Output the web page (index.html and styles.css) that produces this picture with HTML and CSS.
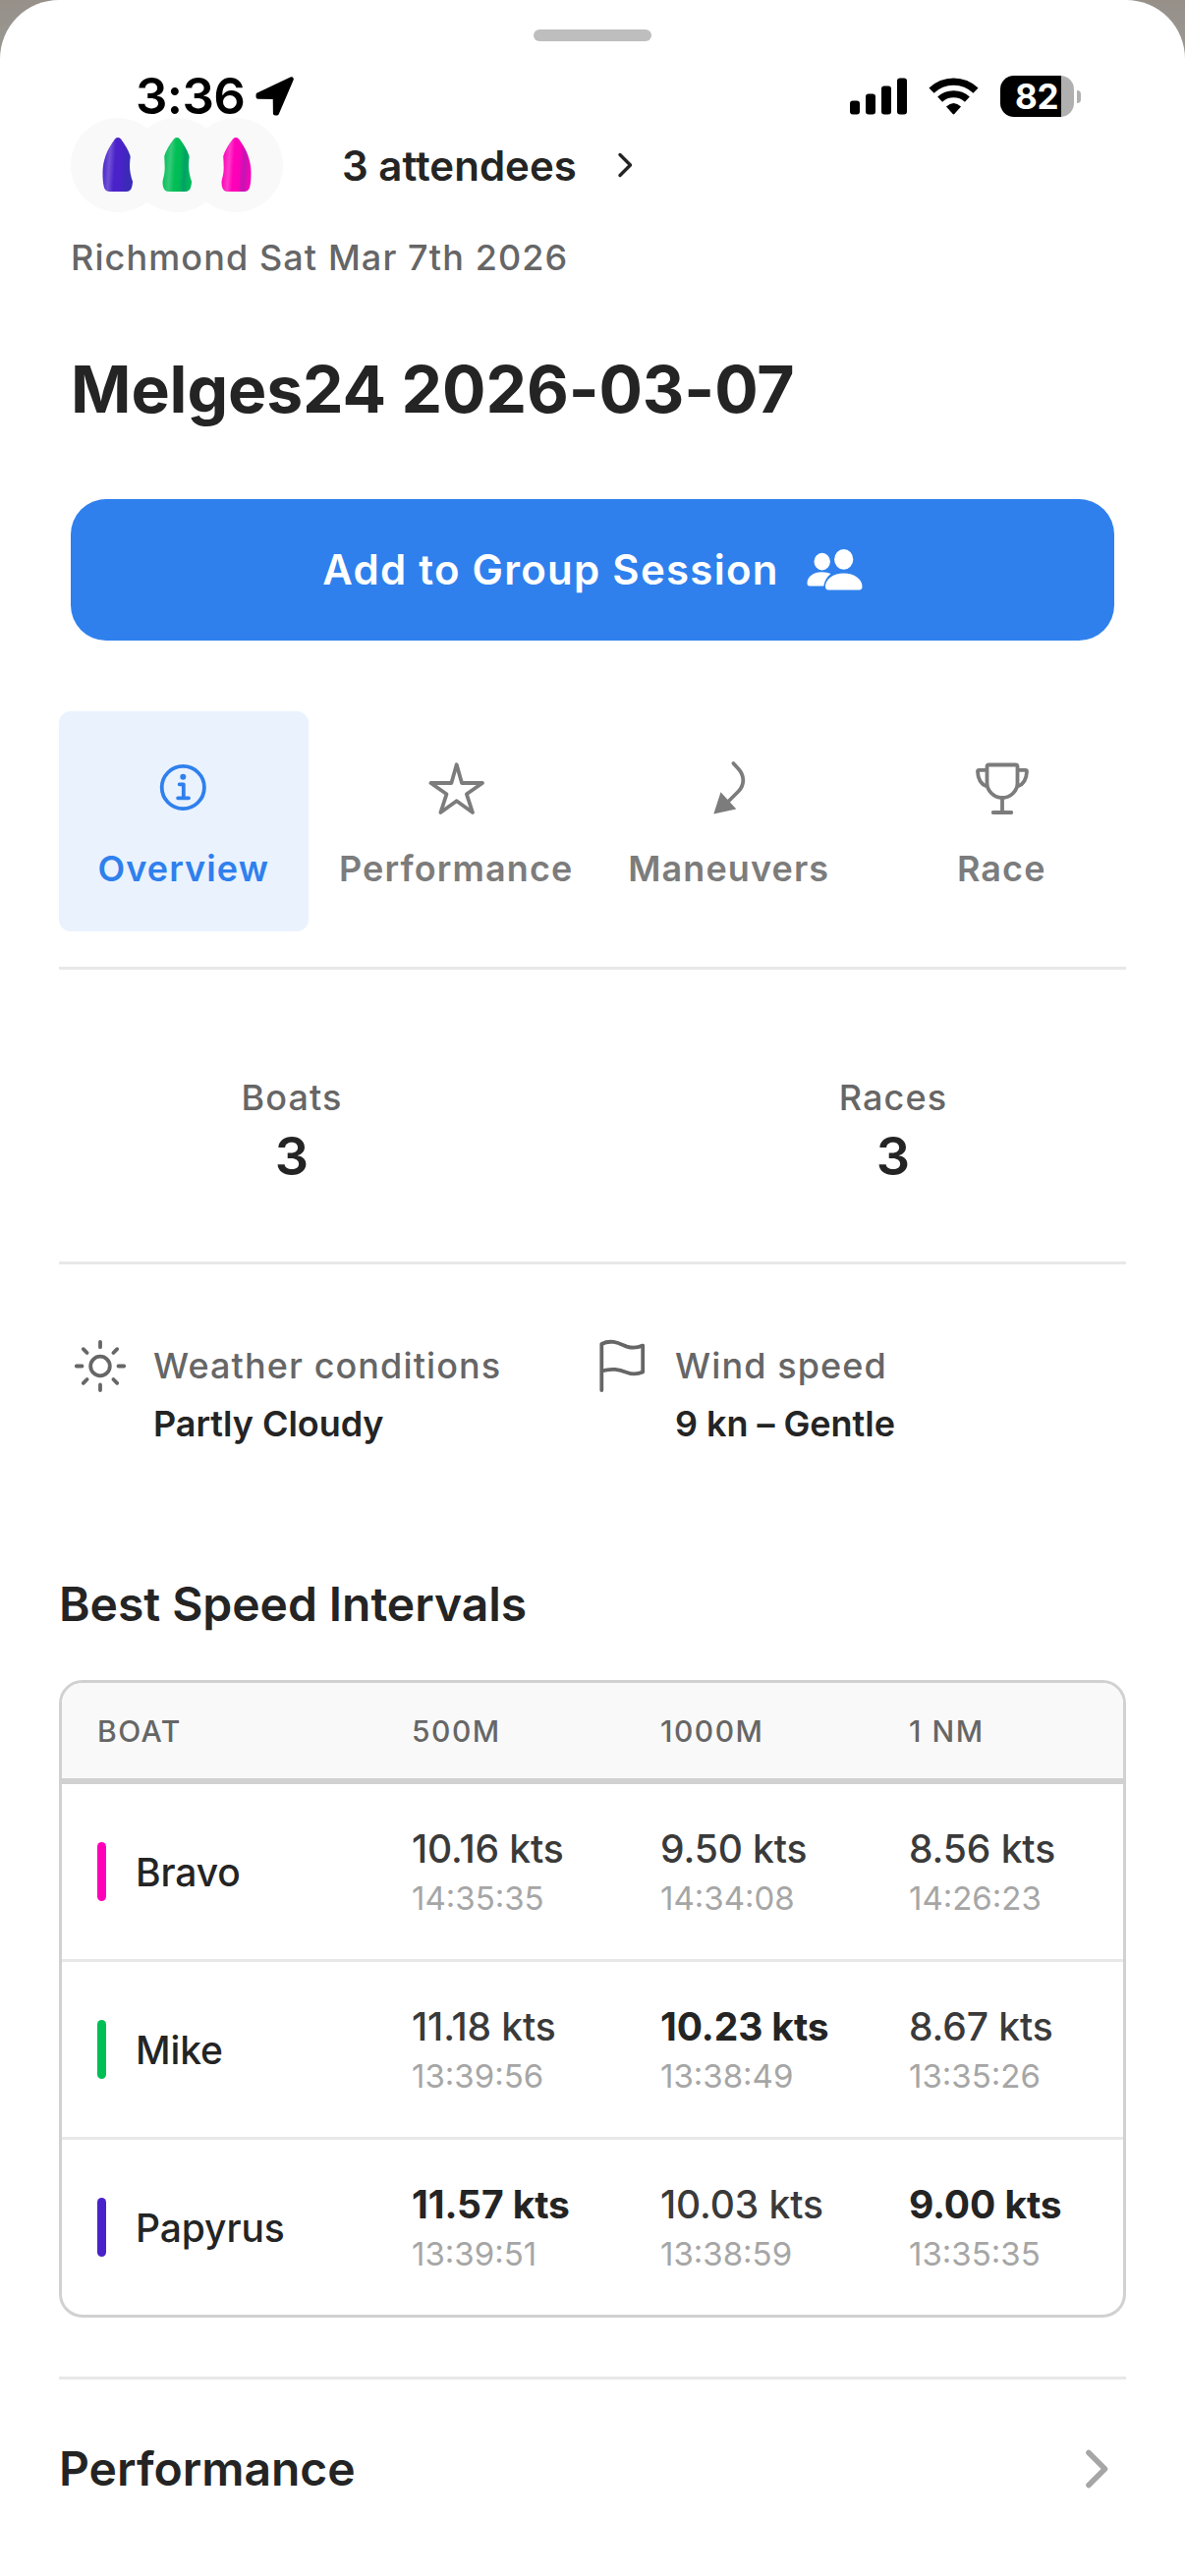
FILE: index.html
```html
<!DOCTYPE html>
<html lang="en">
<head>
    <meta charset="UTF-8">
    <meta name="viewport" content="width=device-width, initial-scale=1.0">
    <title>Melges24 2026-03-07</title>
    <link rel="stylesheet" href="styles.css">
</head>
<body>
    <div class="sheet">
        <div class="handle"></div>

        <!-- Status bar -->
        <div class="status-bar">
            <div class="status-left">
                <span class="time">3:36</span>
                <svg class="location-arrow" width="40" height="40" viewBox="0 0 40 40">
                    <path d="M36.5 2.6 L21.6 37.3 L20.2 37.3 L20 20.6 L2.8 20.4 L2.8 18.6 Z" fill="#000" stroke="#000" stroke-width="4.6" stroke-linejoin="round"/>
                </svg>
            </div>
            <div class="status-right">
                <svg width="59" height="38" viewBox="0 0 59 38">
                    <rect x="0" y="23.5" width="10" height="14" rx="3"/>
                    <rect x="16" y="16.5" width="10" height="21" rx="3"/>
                    <rect x="32" y="8.5" width="10" height="29" rx="3"/>
                    <rect x="48" y="0.5" width="10" height="37" rx="3"/>
                </svg>
                <svg class="wifi" width="52" height="38" viewBox="0 0 52 38">
                    <path d="M3 13.2 A32.5 32.5 0 0 1 48 13.2" fill="none" stroke="#000" stroke-width="7.4"/>
                    <path d="M11.6 22.2 A20.5 20.5 0 0 1 39.4 22.2" fill="none" stroke="#000" stroke-width="7.2"/>
                    <path d="M18 29.6 Q25.5 22.6 33 29.6 L26.3 37 Q25.5 37.8 24.7 37 Z"/>
                </svg>
                <div class="battery"><span class="battery-level">82</span></div>
                <div class="battery-tip"></div>
            </div>
        </div>

        <!-- Session header -->
        <div class="session-header">
            <div class="attendees">
                <div class="avatars">
                    <div class="avatar">
                        <svg width="32" height="56" viewBox="0 0 32 56">
                            <defs>
                                <linearGradient id="hull-papyrus" x1="0" x2="1" y1="0" y2="0.12">
                                    <stop offset="0.05" stop-color="#4a22c9"/>
                                    <stop offset="0.27" stop-color="#7152d6"/>
                                    <stop offset="0.45" stop-color="#4a22c9"/>
                                    <stop offset="0.65" stop-color="#4a22c9"/>
                                    <stop offset="0.85" stop-color="#3a2ab8"/>
                                </linearGradient>
                            </defs>
                            <path d="M13 1.5 Q16 -1.3 19 1.5 C27 12 31.5 23 31.5 36 Q31.5 46 30 51 Q28.6 55 24.5 55 H7.5 Q3.4 55 2 51 Q0.5 46 0.5 36 C0.5 23 5 12 13 1.5 Z" fill="url(#hull-papyrus)"/>
                        </svg>
                    </div>
                    <div class="avatar">
                        <svg width="32" height="56" viewBox="0 0 32 56">
                            <defs>
                                <linearGradient id="hull-mike" x1="0" x2="1" y1="0" y2="0.12">
                                    <stop offset="0.08" stop-color="#06bf58"/>
                                    <stop offset="0.3" stop-color="#35ca79"/>
                                    <stop offset="0.48" stop-color="#00bf55"/>
                                    <stop offset="0.65" stop-color="#00bb56"/>
                                    <stop offset="0.8" stop-color="#00a066"/>
                                    <stop offset="0.98" stop-color="#00b85a"/>
                                </linearGradient>
                            </defs>
                            <path d="M13 1.5 Q16 -1.3 19 1.5 C27 12 31.5 23 31.5 36 Q31.5 46 30 51 Q28.6 55 24.5 55 H7.5 Q3.2 55 2 50 Q1 45.5 2.3 41 C4.4 34 3.6 27 3.2 19 Q6 10 13 1.5 Z" fill="url(#hull-mike)"/>
                        </svg>
                    </div>
                    <div class="avatar">
                        <svg width="32" height="56" viewBox="0 0 32 56">
                            <defs>
                                <linearGradient id="hull-bravo" x1="0" x2="1" y1="0" y2="0.12">
                                    <stop offset="0.08" stop-color="#ff00b8"/>
                                    <stop offset="0.3" stop-color="#ff3ac8"/>
                                    <stop offset="0.46" stop-color="#ff00b8"/>
                                    <stop offset="0.66" stop-color="#fb00b8"/>
                                    <stop offset="0.82" stop-color="#bd18b0"/>
                                    <stop offset="0.98" stop-color="#f204b8"/>
                                </linearGradient>
                            </defs>
                            <path d="M13 1.5 Q16 -1.3 19 1.5 C27 12 31.5 23 31.5 36 Q31.5 46 30 51 Q28.6 55 24.5 55 H7.5 Q3.2 55 2 50 Q1 45.5 2.3 41 C4.4 34 3.6 27 3.2 19 Q6 10 13 1.5 Z" fill="url(#hull-bravo)"/>
                        </svg>
                    </div>
                </div>
                <span class="attendees-label">3 attendees</span>
                <svg width="18" height="28" viewBox="0 0 18 28">
                    <path d="M3 3.5 L13.5 14 L3 24.5" fill="none" stroke="#242424" stroke-width="3.4" stroke-linecap="round" stroke-linejoin="round"/>
                </svg>
            </div>
            <p class="location">Richmond Sat Mar 7th 2026</p>
            <h1 class="title">Melges24 2026-03-07</h1>
            <button class="btn-group">
                <span>Add to Group Session</span>
                <svg width="57" height="42" viewBox="0 0 57 42" fill="#fff">
                    <ellipse cx="15.7" cy="12.6" rx="8.2" ry="8.8"/>
                    <ellipse cx="37.7" cy="10.4" rx="9.6" ry="10.4"/>
                    <path d="M0.5 34.5 C0.5 28 7 23.2 15.5 23.2 Q21 23.2 24.5 25 Q18.5 30 17.3 37.4 H3 Q0.5 37.4 0.5 34.5 Z"/>
                    <path d="M19 38 C19 30.5 27 24.5 37.7 24.5 S56.5 30.5 56.5 38 Q56.5 41.4 53.5 41.4 H22 Q19 41.4 19 38 Z"/>
                </svg>
            </button>
        </div>

        <!-- Tabs -->
        <div class="tabs">
            <div class="tab active">
                <svg class="icon" viewBox="0 0 60 60">
                    <circle cx="29.3" cy="29.5" r="21.6"/>
                    <circle class="filled" cx="29.3" cy="18.7" r="3"/>
                    <path d="M25.6 26.3 H29.8 V40.3 M24.1 40.3 H35"/>
                </svg>
                <span>Overview</span>
            </div>
            <div class="tab">
                <svg class="icon" viewBox="0 0 60 60">
                    <path d="M30.7 6.3 L36 25 H57 L40.9 36.3 L47 55 L30.7 43.3 L14.4 55 L20.5 36.3 L4.4 25 H25.4 Z"/>
                </svg>
                <span>Performance</span>
            </div>
            <div class="tab">
                <svg class="icon" viewBox="0 0 60 60">
                    <path d="M34.4 5 L39 10 C46 17.5 46 26.5 39.5 33.5 L28 45"/>
                    <path class="filled" d="M14.3 56.5 L21.5 34.3 L37.3 51.5 Z"/>
                </svg>
                <span>Maneuvers</span>
            </div>
            <div class="tab">
                <svg class="icon" viewBox="0 0 60 60">
                    <path d="M15.5 8.5 Q15.5 6.5 17.5 6.5 H44.5 Q46.5 6.5 46.5 8.5 V25 C46.5 33 39.5 40 31 40 S15.5 33 15.5 25 Z"/>
                    <path d="M15 11.8 H7.5 Q6 11.8 6 13.3 C6.3 20.5 9 26 15 28.3 M47 11.8 H54.5 Q56 11.8 56 13.3 C55.7 20.5 53 26 47 28.3"/>
                    <path d="M31 40 V55 M21.7 55 H40.3"/>
                </svg>
                <span>Race</span>
            </div>
        </div>

        <!-- Totals -->
        <div class="stats">
            <div class="stat">
                <span class="stat-label">Boats</span>
                <span class="stat-value">3</span>
            </div>
            <div class="stat">
                <span class="stat-label">Races</span>
                <span class="stat-value">3</span>
            </div>
        </div>

        <!-- Weather and wind -->
        <div class="conditions">
            <div class="condition">
                <svg class="icon" viewBox="0 0 60 60">
                    <circle cx="30" cy="30.5" r="9.8"/>
                    <path d="M30 5.8 V11.2 M30 49.5 V55 M5.8 30.5 H11.5 M48.5 30.5 H54.2 M12.8 13.2 L16.6 17 M47.2 13.2 L43.4 17 M12.8 47.8 L16.6 44 M47.2 47.8 L43.4 44"/>
                </svg>
                <div>
                    <p class="condition-label">Weather conditions</p>
                    <p class="condition-value">Partly Cloudy</p>
                </div>
            </div>
            <div class="condition">
                <svg class="icon" viewBox="0 0 60 60">
                    <path d="M9.3 55 V8 C20 2.5 29 8.5 35 10.6 Q43 13.2 51.2 9.6 V36.5 Q43 40 35 37 C27 34 20 32.3 9.3 35.5"/>
                </svg>
                <div>
                    <p class="condition-label">Wind speed</p>
                    <p class="condition-value">9 kn – Gentle</p>
                </div>
            </div>
        </div>

        <!-- Best speed table -->
        <h2 class="section-title">Best Speed Intervals</h2>
        <div class="table">
            <div class="table-row table-head">
                <span>BOAT</span>
                <span>500M</span>
                <span>1000M</span>
                <span>1 NM</span>
            </div>
            <div class="table-row">
                <div class="boat bravo">Bravo</div>
                <div><p class="speed">10.16 kts</p><p class="at">14:35:35</p></div>
                <div><p class="speed">9.50 kts</p><p class="at">14:34:08</p></div>
                <div><p class="speed">8.56 kts</p><p class="at">14:26:23</p></div>
            </div>
            <div class="table-row">
                <div class="boat mike">Mike</div>
                <div><p class="speed">11.18 kts</p><p class="at">13:39:56</p></div>
                <div><p class="speed best">10.23 kts</p><p class="at">13:38:49</p></div>
                <div><p class="speed">8.67 kts</p><p class="at">13:35:26</p></div>
            </div>
            <div class="table-row">
                <div class="boat papyrus">Papyrus</div>
                <div><p class="speed best">11.57 kts</p><p class="at">13:39:51</p></div>
                <div><p class="speed">10.03 kts</p><p class="at">13:38:59</p></div>
                <div><p class="speed best">9.00 kts</p><p class="at">13:35:35</p></div>
            </div>
        </div>

        <div class="section-link">
            <h2>Performance</h2>
            <svg width="28" height="44" viewBox="0 0 28 44">
                <path d="M5 5.5 L21.5 22 L5 38.5" fill="none" stroke="#a6a6a6" stroke-width="5.6" stroke-linecap="round" stroke-linejoin="round"/>
            </svg>
        </div>
    </div>
</body>
</html>
```
FILE: styles.css
```css
:root {
    --text: #242424;
    --text-mid: #3a3a3a;
    --text-gray: #666;
    --text-tab: #7c7c7c;
    --text-light: #a6a6a6;
    --blue: #2f80ed;
    --blue-light: #eaf2fe;
    --line: #e8e8e8;
    --border: #d1d1d1;
    --bg-soft: #f9f9f9;
    --bravo: #ff00b8;
    --mike: #00bf55;
    --papyrus: #4a22c9;
}

* {
    margin: 0;
    padding: 0;
    box-sizing: border-box;
}

body {
    background: linear-gradient(#969089, #9b9893 60px);
    color: var(--text);
    font-family: Inter, "Liberation Sans", sans-serif;
    overflow: hidden;
}

.sheet {
    height: 2622px;
    padding: 30px 60px 0;
    background-color: #fff;
    border-radius: 60px 60px 0 0;
}

.handle {
    width: 120px;
    height: 12px;
    margin: 0 auto;
    border-radius: 6px;
    background-color: #bebebe;
}

/* Status bar */
.status-bar {
    display: flex;
    justify-content: space-between;
    align-items: center;
    height: 78px;
    padding: 34px 46px 0 78px;
    color: #000;
}

.status-left,
.status-right {
    display: flex;
    align-items: center;
    height: 44px;
}

.time {
    font-size: 51px;
    font-weight: 600;
    line-height: 44px;
    letter-spacing: -0.6px;
}

.location-arrow {
    margin-left: 11px;
}

.wifi {
    margin-left: 21px;
}

.battery {
    width: 75px;
    height: 42px;
    margin-left: 21px;
    border-radius: 14px;
    background: linear-gradient(90deg, #000 62px, #b0b0b0 62px);
}

.battery-level {
    display: block;
    padding-left: 15px;
    color: #fff;
    font-size: 35px;
    font-weight: 700;
    line-height: 42px;
    letter-spacing: -0.4px;
}

.battery-tip {
    width: 4px;
    height: 13px;
    margin-left: 3px;
    border-radius: 0 4px 4px 0;
    background-color: #b0b0b0;
}

/* Session header */
.session-header {
    padding: 0 12px;
}

.attendees {
    display: flex;
    align-items: center;
}

.avatars {
    display: flex;
}

.avatar {
    display: flex;
    justify-content: center;
    align-items: center;
    width: 96px;
    height: 96px;
    border-radius: 50%;
    background-color: var(--bg-soft);
}

.avatar + .avatar {
    margin-left: -36px;
}

.attendees-label {
    margin: 0 41px 0 60px;
    padding-top: 2px;
    font-size: 42px;
    font-weight: 600;
    line-height: 54px;
}

.location {
    margin-top: 19px;
    color: var(--text-gray);
    font-size: 36px;
    font-weight: 500;
    line-height: 54px;
    letter-spacing: 1.1px;
}

.title {
    margin-top: 65px;
    font-size: 66px;
    font-weight: 700;
    line-height: 84px;
    letter-spacing: -0.1px;
}

.btn-group {
    display: flex;
    justify-content: center;
    align-items: center;
    gap: 28px;
    width: 100%;
    height: 144px;
    margin-top: 70px;
    border: none;
    border-radius: 36px;
    background-color: var(--blue);
    color: #fff;
    font-family: inherit;
    font-size: 42px;
    font-weight: 600;
    letter-spacing: 1.25px;
}

.btn-group span {
    padding-bottom: 2px;
}

/* Tabs */
.tabs {
    display: grid;
    grid-template-columns: repeat(4, 1fr);
    gap: 24px;
    margin-top: 72px;
    padding-bottom: 36px;
    border-bottom: 3px solid var(--line);
}

.tab {
    display: flex;
    flex-direction: column;
    align-items: center;
    gap: 25px;
    height: 224px;
    padding-top: 48px;
    border-radius: 12px;
    color: var(--text-tab);
    font-size: 36px;
    font-weight: 600;
    line-height: 54px;
    letter-spacing: 1.1px;
    white-space: nowrap;
}

.tab.active {
    background-color: var(--blue-light);
    color: var(--blue);
}

.icon {
    flex: none;
    width: 60px;
    height: 60px;
    fill: none;
    stroke: currentColor;
    stroke-width: 3.8;
    stroke-linecap: round;
    stroke-linejoin: round;
}

.icon .filled {
    fill: currentColor;
    stroke: none;
}

/* Totals */
.stats {
    display: grid;
    grid-template-columns: 1fr 1fr;
    gap: 138px;
    padding: 103px 0 75px;
    border-bottom: 3px solid var(--line);
}

.stat {
    display: flex;
    flex-direction: column;
    align-items: center;
}

.stat-label {
    color: var(--text-gray);
    font-size: 36px;
    font-weight: 500;
    line-height: 54px;
    letter-spacing: 1.1px;
}

.stat-value {
    font-size: 54px;
    font-weight: 600;
    line-height: 65px;
}

/* Weather and wind */
.conditions {
    display: grid;
    grid-template-columns: 1fr 1fr;
    margin-top: 73px;
    padding: 0 12px;
}

.condition {
    display: flex;
    align-items: flex-start;
    gap: 24px;
    color: var(--text-gray);
}

.condition-label {
    font-size: 36px;
    font-weight: 500;
    line-height: 60px;
    letter-spacing: 1.1px;
}

.condition-value {
    color: var(--text);
    font-size: 36px;
    font-weight: 600;
    line-height: 58px;
    letter-spacing: -0.05px;
}

/* Best speed table */
.section-title {
    margin-top: 125px;
    font-size: 48px;
    font-weight: 600;
    line-height: 60px;
    letter-spacing: -0.05px;
}

.table {
    margin-top: 47px;
    border: 3px solid var(--border);
    border-radius: 24px;
    overflow: hidden;
}

.table-row {
    display: grid;
    grid-template-columns: 320px 253px 253px 1fr;
    align-items: center;
    height: 181px;
    padding-left: 36px;
    border-bottom: 3px solid var(--line);
}

.table-row:last-child {
    height: 178px;
    border-bottom: none;
}

.table-head {
    height: 103px;
    border-bottom: 6px solid var(--border);
    background-color: var(--bg-soft);
    color: var(--text-gray);
    font-size: 30px;
    font-weight: 500;
    letter-spacing: 1.5px;
}

.boat {
    display: flex;
    align-items: center;
    gap: 30px;
    font-size: 39px;
    font-weight: 500;
    letter-spacing: -0.1px;
}

.boat::before {
    content: '';
    width: 9px;
    height: 60px;
    border-radius: 5px;
}

.bravo::before {
    background-color: var(--bravo);
}

.mike::before {
    background-color: var(--mike);
}

.papyrus::before {
    background-color: var(--papyrus);
}

.speed {
    color: var(--text-mid);
    font-size: 39px;
    font-weight: 500;
    line-height: 54px;
    letter-spacing: -0.1px;
}

.speed.best {
    color: var(--text);
    font-weight: 700;
}

.at {
    color: var(--text-light);
    font-size: 33px;
    line-height: 46px;
}

/* Link to the next section */
.section-link {
    display: flex;
    justify-content: space-between;
    align-items: center;
    margin-top: 60px;
    padding: 61px 15px 0 0;
    border-top: 3px solid var(--line);
}

.section-link h2 {
    font-size: 48px;
    font-weight: 600;
    line-height: 60px;
}
```
